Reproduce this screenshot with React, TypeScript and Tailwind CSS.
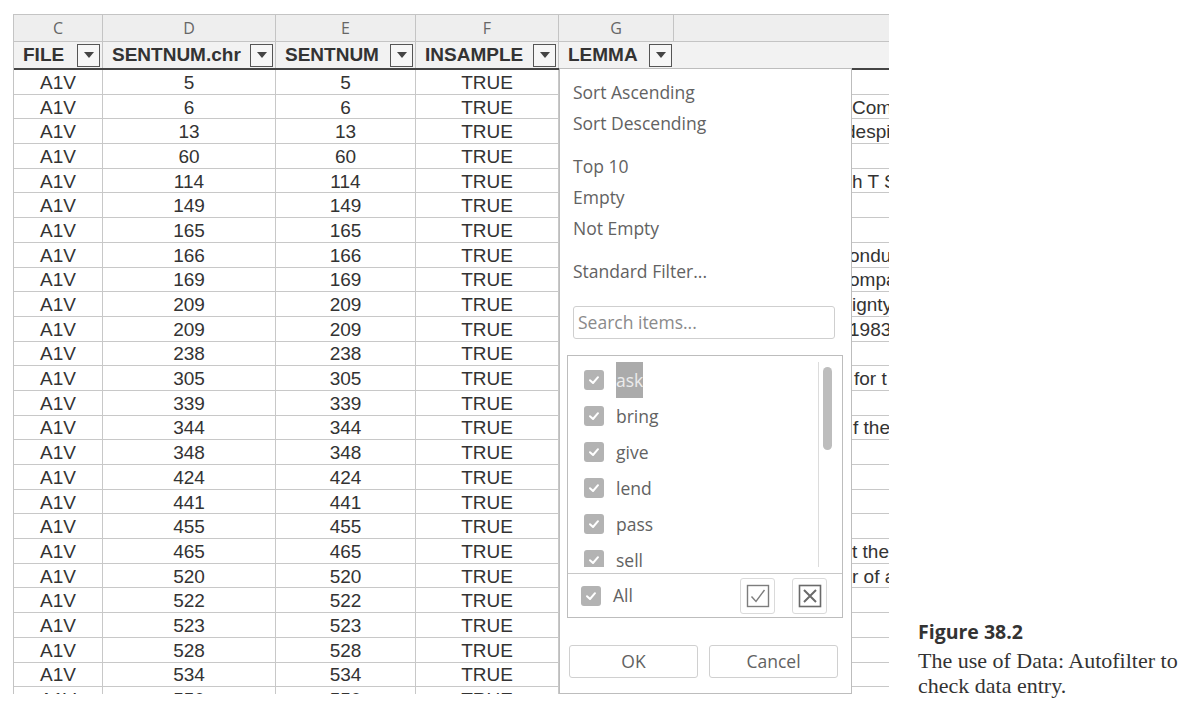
import React from "react";

const nums = [5, 6, 13, 60, 114, 149, 165, 166, 169, 209, 209, 238, 305, 339, 344, 348, 424, 441, 455, 465, 520, 522, 523, 528, 534, 550];

const frags: Record<number, { t: string; c: string }> = {
  1: { t: "Com", c: "pl-[178px]" },
  2: { t: "despi", c: "pl-[171px]" },
  4: { t: "h T S", c: "pl-[178px]" },
  7: { t: "onduc", c: "pl-[175px]" },
  8: { t: "ompa", c: "pl-[175px]" },
  9: { t: "ignty", c: "pl-[178px]" },
  10: { t: "1983,", c: "pl-[175px]" },
  12: { t: "for t", c: "pl-[180px]" },
  14: { t: "f the", c: "pl-[179px]" },
  19: { t: "t the", c: "pl-[178px]" },
  20: { t: "r of a", c: "pl-[178px]" },
};

const items = ["ask", "bring", "give", "lend", "pass", "sell"];

function FilterBtn() {
  return (
    <div className="w-[23px] h-[23px] border-[1.5px] border-[#555] bg-[#f6f6f6] flex items-center justify-center shrink-0">
      <svg width="12" height="8" viewBox="0 0 12 8">
        <polygon points="1,1 11,1 6,7" fill="#444" />
      </svg>
    </div>
  );
}

function Check() {
  return (
    <div className="w-[20px] h-[20px] rounded-[3px] bg-[#b3b3b3] flex items-center justify-center shrink-0">
      <svg width="14" height="14" viewBox="0 0 14 14">
        <path d="M3 7.2 L6 10 L11 4.2" stroke="#fff" strokeWidth="2" fill="none" strokeLinecap="round" strokeLinejoin="round" />
      </svg>
    </div>
  );
}

const colW = ["w-[89px]", "w-[173px]", "w-[140px]", "w-[143px]", "w-[115px]"];

export default function App() {
  return (
    <div className="w-[1193px] h-[711px] bg-white overflow-hidden flex pl-[13px] pt-[14px] font-['Liberation_Sans',Arial,sans-serif]">
      <div className="relative w-[876px] h-[680px] overflow-hidden border-l border-t border-[#c4c4c4] shrink-0">
        {/* column letters */}
        <div className="flex h-[27px] bg-[#eeeeee] border-b border-[#c4c4c4] text-[16px] text-[#666] font-['Open_Sans',sans-serif]">
          {["C", "D", "E", "F", "G"].map((l, i) => (
            <div key={l} className={`${colW[i]} border-r border-[#c4c4c4] flex items-center justify-center`}>{l}</div>
          ))}
          <div className="flex-1" />
        </div>
        {/* filter header */}
        <div className="flex h-[28px] bg-[#f2f2f2] border-b-2 border-[#444] text-[19px] font-bold text-[#333]">
          {["FILE", "SENTNUM.chr", "SENTNUM", "INSAMPLE", "LEMMA"].map((h, i) => (
            <div key={h} className={`${colW[i]} ${i < 4 ? "border-r border-[#c4c4c4]" : ""} flex items-center justify-between pl-[9px] pr-[2px]`}>
              <span>{h}</span>
              <FilterBtn />
            </div>
          ))}
          <div className="flex-1" />
        </div>
        {/* rows */}
        {nums.map((n, i) => (
          <div key={i} className="flex h-[24.7px] border-b border-[#c8c8c8] text-[19px] text-[#333] leading-none">
            <div className={`${colW[0]} border-r border-[#c8c8c8] flex items-center justify-center pt-[1px]`}>A1V</div>
            <div className={`${colW[1]} border-r border-[#c8c8c8] flex items-center justify-center pt-[1px]`}>{n}</div>
            <div className={`${colW[2]} border-r border-[#c8c8c8] flex items-center justify-center pt-[1px]`}>{n}</div>
            <div className={`${colW[3]} border-r border-[#c8c8c8] flex items-center justify-center pt-[1px]`}>TRUE</div>
            <div className={`${colW[4]} border-r border-[#c8c8c8] flex items-center`}></div>
            <div className={`flex-1 flex items-center whitespace-nowrap overflow-hidden pt-[1px] ${frags[i] ? frags[i].c : ""}`}>
              {frags[i] ? frags[i].t : ""}
            </div>
          </div>
        ))}

        {/* autofilter popup */}
        <div className="absolute left-[545px] top-[53px] w-[293px] h-[626px] bg-white border border-[#bdbdbd] flex flex-col font-['Open_Sans',sans-serif] text-[17.5px] text-[#626262]">
          <div className="pt-[7.5px] pl-[13px] leading-[31px]">
            <div>Sort Ascending</div>
            <div>Sort Descending</div>
            <div className="mt-[12px]">Top 10</div>
            <div>Empty</div>
            <div>Not Empty</div>
            <div className="mt-[12px]">Standard Filter...</div>
          </div>
          <div className="mt-[19.5px] ml-[13px] w-[262px] h-[33px] border border-[#cfcfcf] rounded-[3px] flex items-center pl-[4px] text-[#8a8a8a]">
            Search items...
          </div>
          <div className="mt-[16px] ml-[7px] w-[276px] h-[263px] border border-[#bdbdbd] flex flex-col">
            <div className="h-[211px] overflow-hidden flex">
              <div className="flex-1 pt-[6px]">
                {items.map((it, i) => (
                  <div key={it} className="h-[36px] flex items-center pl-[16px]">
                    <Check />
                    {i === 0 ? (
                      <span className="ml-[12px] h-[36px] flex items-center bg-[#ababab] text-[#ececec]">{it}</span>
                    ) : (
                      <span className="ml-[12px]">{it}</span>
                    )}
                  </div>
                ))}
              </div>
              <div className="w-[24px] mt-[6px] border-l border-[#dcdcdc]">
                <div className="ml-[4px] mt-[5px] w-[9px] h-[83px] rounded-full bg-[#bdbdbd]" />
              </div>
            </div>
            <div className="h-[6px]" />
            <div className="flex-1 border-t border-[#c8c8c8] flex items-center pl-[13px] pr-[15px]">
              <Check />
              <span className="ml-[12px]">All</span>
              <div className="ml-auto w-[35px] h-[36px] border border-[#dadada] rounded-[3px] flex items-center justify-center">
                <svg width="24" height="24" viewBox="0 0 24 24">
                  <rect x="1.5" y="1.5" width="21" height="21" fill="none" stroke="#7d7d7d" strokeWidth="1.4" />
                  <path d="M5.5 12.5 L10 17.5 L18.5 6" fill="none" stroke="#7d7d7d" strokeWidth="1.4" />
                </svg>
              </div>
              <div className="ml-[17px] w-[35px] h-[36px] border border-[#dadada] rounded-[3px] flex items-center justify-center">
                <svg width="24" height="24" viewBox="0 0 24 24">
                  <rect x="1.5" y="1.5" width="21" height="21" fill="none" stroke="#6a6a6a" strokeWidth="1.6" />
                  <path d="M6 6 L18 18 M18 6 L6 18" fill="none" stroke="#6a6a6a" strokeWidth="2" />
                </svg>
              </div>
            </div>
          </div>
          <div className="mt-[27px] flex">
            <div className="ml-[9px] w-[129px] h-[33px] border border-[#d0d0d0] rounded-[3px] flex items-center justify-center">OK</div>
            <div className="ml-[11px] w-[129px] h-[33px] border border-[#d0d0d0] rounded-[3px] flex items-center justify-center">Cancel</div>
          </div>
        </div>
      </div>

      {/* caption */}
      <div className="ml-[29px] pt-[605px] text-[#333] whitespace-nowrap">
        <div className="h-[26px] leading-[26px] font-['Open_Sans',sans-serif] font-bold text-[19.5px]">Figure 38.2</div>
        <div className="mt-[3px] leading-[25px] font-['Liberation_Serif','Times_New_Roman',serif] text-[22px]">
          The use of Data: Autofilter to
          <br />
          check data entry.
        </div>
      </div>
    </div>
  );
}
